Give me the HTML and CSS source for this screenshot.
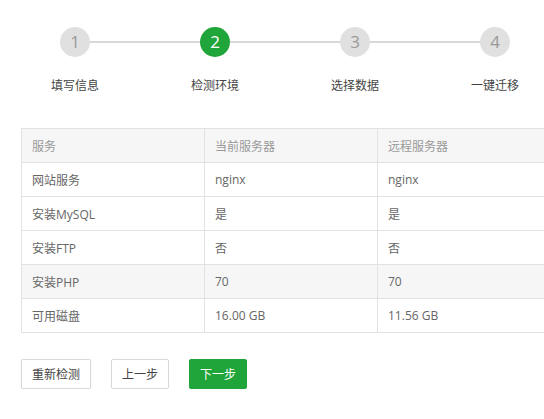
FILE: index.html
```html
<!DOCTYPE html>
<html lang="zh-CN">
<head>
<meta charset="utf-8">
<title>一键迁移</title>
<link rel="stylesheet" href="styles.css">
</head>
<body>
<div class="wizard">
  <div class="steps">
    <div class="step"><span class="dot">1</span><span class="label">填写信息</span></div>
    <div class="step active"><span class="dot">2</span><span class="label">检测环境</span></div>
    <div class="step"><span class="dot">3</span><span class="label">选择数据</span></div>
    <div class="step"><span class="dot">4</span><span class="label">一键迁移</span></div>
  </div>
  <table class="env">
    <thead>
      <tr><th class="c1">服务</th><th class="c2">当前服务器</th><th class="c3">远程服务器</th></tr>
    </thead>
    <tbody>
      <tr><td>网站服务</td><td>nginx</td><td>nginx</td></tr>
      <tr><td>安装MySQL</td><td>是</td><td>是</td></tr>
      <tr><td>安装FTP</td><td>否</td><td>否</td></tr>
      <tr class="hover"><td>安装PHP</td><td>70</td><td>70</td></tr>
      <tr><td>可用磁盘</td><td>16.00 GB</td><td>11.56 GB</td></tr>
    </tbody>
  </table>
  <div class="actions">
    <button class="btn">重新检测</button>
    <button class="btn">上一步</button>
    <button class="btn primary">下一步</button>
  </div>
</div>
</body>
</html>
```
FILE: styles.css
```css
html, body {
  margin: 0;
  padding: 0;
  background: #fff;
  overflow: hidden;
}
body {
  font-family: "Open Sans", "Noto Sans CJK SC", sans-serif;
  font-size: 12px;
  color: #555;
}
.wizard {
  width: 580px;
}
.steps {
  display: flex;
  margin-left: 5px;
  padding-top: 27px;
  position: relative;
}
.steps::before {
  content: "";
  position: absolute;
  left: 70px;
  width: 420px;
  top: 41px;
  height: 2px;
  background: #d8d8d8;
}
.step {
  width: 140px;
  display: flex;
  flex-direction: column;
  align-items: center;
  position: relative;
}
.dot {
  width: 30px;
  height: 30px;
  border-radius: 50%;
  background: #e0e0e0;
  color: #9a9a9a;
  font-size: 17px;
  line-height: 30px;
  text-align: center;
  font-family: "Open Sans", sans-serif;
}
.step.active .dot {
  background: #20a53a;
  color: #fff;
}
.label {
  margin-top: 21px;
  line-height: 16px;
  font-size: 12px;
  color: #444;
}
.env {
  margin: 34px 0 0 21px;
  width: 537px;
  border-collapse: collapse;
  table-layout: fixed;
}
.env th, .env td {
  border: 1px solid #e2e2e2;
  height: 33px;
  padding: 0 10px;
  text-align: left;
  font-weight: normal;
  font-size: 12px;
}
.env th {
  background: #f6f6f6;
  color: #999;
}
.env td {
  color: #666;
}
.env .c1 { width: 162px; }
.env .c2 { width: 152px; }
.env tr.hover td {
  background: #f6f6f6;
}
.actions {
  display: flex;
  gap: 20px;
  margin: 26px 0 0 21px;
}
.btn {
  height: 30px;
  padding: 0 10px;
  border: 1px solid #d9d9d9;
  border-radius: 2px;
  background: #fff;
  color: #444;
  font-family: "Open Sans", "Noto Sans CJK SC", sans-serif;
  font-size: 12px;
  box-shadow: 0 0 2px rgba(0,0,0,0.06);
}
.btn.primary {
  background: #20a53a;
  border-color: #20a53a;
  color: #fff;
  width: 58px;
}
```
